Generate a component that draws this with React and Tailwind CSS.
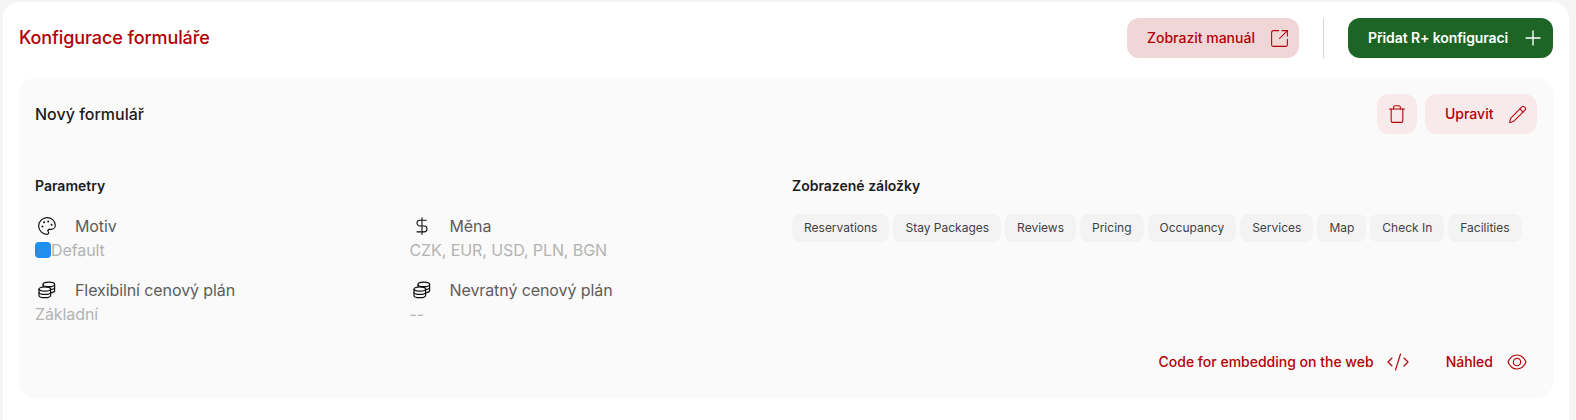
import { CodeXml, Palette, Pencil, Plus, SquareArrowOutUpRight, Trash, DollarSign } from "lucide-react";

const tabs = ["Reservations", "Stay Packages", "Reviews", "Pricing", "Occupancy", "Services", "Map", "Check In", "Facilities"];

function Coins() {
  // stacked coins, drawn because the packages have no close match
  return (
    <svg width="18" height="18" viewBox="0 0 18 18" fill="none" stroke="currentColor" strokeWidth="1.2">
      <ellipse cx="6.8" cy="8" rx="5.8" ry="2.2" />
      <path d="M1 8v6.4c0 1.2 2.6 2.2 5.8 2.2s5.8-1 5.8-2.2V8" />
      <path d="M1 11.2c0 1.2 2.6 2.2 5.8 2.2s5.8-1 5.8-2.2" />
      <path d="M5 5.7V3.4c0-1.2 2.6-2.2 5.8-2.2s5.8 1 5.8 2.2v6.4c0 .9-1.6 1.7-4 2" />
      <path d="M5 3.4c0 1.2 2.6 2.2 5.8 2.2s5.8-1 5.8-2.2" />
      <path d="M12.6 8.7c2.4-.3 4-1.1 4-2.1" />
    </svg>
  );
}

function EyeIcon() {
  return (
    <svg width="24" height="24" viewBox="0 0 24 24" fill="none" stroke="currentColor" strokeWidth="1.15">
      <path d="M3 12c2-4.5 5.4-7 9-7s7 2.5 9 7c-2 4.5-5.4 7-9 7s-7-2.5-9-7z" />
      <circle cx="12" cy="12" r="3.7" />
    </svg>
  );
}

function Param({ icon, label, value, swatch }) {
  return (
    <div className="flex flex-col tracking-[-0.09px]">
      <div className="flex items-center gap-4 h-6">
        <span className="w-6 flex justify-center text-[#111]">{icon}</span>
        <span className="text-base text-[#5c5c5c]">{label}</span>
      </div>
      <div className="flex items-center h-6 text-base text-[#b3b3b3]">
        {swatch && <span className="w-4 h-4 rounded bg-[#1e8fef]" />}
        <span>{value}</span>
      </div>
    </div>
  );
}

export default function App() {
  return (
    <div className="h-[420px] overflow-hidden bg-[#f5f5f5] pt-[2px] pl-[3px] pr-[7px] font-['Inter',sans-serif]">
      <div className="h-[440px] bg-white rounded-2xl pt-4 px-4">
        <div className="flex items-center justify-between h-10">
          <h1 className="text-lg font-[450] tracking-[-0.1px] text-[#b30006]">Konfigurace formuláře</h1>
          <div className="flex items-center">
            <button className="flex items-center justify-between w-[172px] h-10 pl-5 pr-[9px] rounded-xl bg-[#f1d6d8] text-sm font-medium text-[#b30006]">
              Zobrazit manuál
              <SquareArrowOutUpRight size={21} strokeWidth={1.2} />
            </button>
            <div className="w-px h-10 bg-[#d4d4d4] mx-6" />
            <button className="flex items-center justify-between w-[205px] h-10 pl-5 pr-2 rounded-xl bg-[#1c6524] text-sm font-semibold tracking-[-0.1px] text-white">
              Přidat R+ konfiguraci
              <Plus size={24} strokeWidth={1.4} />
            </button>
          </div>
        </div>

        <div className="mt-5 h-[320px] rounded-2xl bg-[#fafafa] p-4 flex flex-col">
          <div className="flex items-center justify-between h-10">
            <h2 className="text-base font-medium text-[#1c1c1e]">Nový formulář</h2>
            <div className="flex items-center gap-2">
              <button className="w-10 h-10 rounded-xl bg-[#f8eaeb] flex items-center justify-center text-[#b30006]">
                <Trash size={20} strokeWidth={1.3} />
              </button>
              <button className="flex items-center justify-between w-[112px] h-10 pl-5 pr-[10px] rounded-xl bg-[#f8eaeb] text-sm font-medium text-[#b30006]">
                Upravit
                <Pencil size={19} strokeWidth={1.3} />
              </button>
            </div>
          </div>

          <div className="mt-10 grid grid-cols-2 gap-3">
            <div>
              <h3 className="text-sm leading-6 font-semibold text-[#1c1c1e]">Parametry</h3>
              <div className="mt-4 grid grid-cols-2 gap-x-1 gap-y-4">
                <Param icon={<Palette size={20} strokeWidth={1.4} />} label="Motiv" value="Default" swatch />
                <Param icon={<DollarSign size={20} strokeWidth={1.3} />} label="Měna" value="CZK, EUR, USD, PLN, BGN" />
                <Param icon={<Coins />} label="Flexibilní cenový plán" value="Základní" />
                <Param icon={<Coins />} label="Nevratný cenový plán" value="--" />
              </div>
            </div>
            <div>
              <h3 className="text-sm leading-6 font-semibold text-[#1c1c1e]">Zobrazené záložky</h3>
              <div className="mt-4 flex flex-wrap gap-1">
                {tabs.map((t) => (
                  <span key={t} className="h-7 px-3 flex items-center rounded-lg bg-[#f3f3f3] text-xs text-[#3f3f46]">
                    {t}
                  </span>
                ))}
              </div>
            </div>
          </div>

          <div className="mt-auto flex items-center justify-end gap-9 h-10 pr-2 text-sm font-medium text-[#b30006]">
            <button className="flex items-center gap-3">
              Code for embedding on the web
              <CodeXml size={24} strokeWidth={1.15} />
            </button>
            <button className="flex items-center gap-3">
              Náhled
              <EyeIcon />
            </button>
          </div>
        </div>
      </div>
    </div>
  );
}
